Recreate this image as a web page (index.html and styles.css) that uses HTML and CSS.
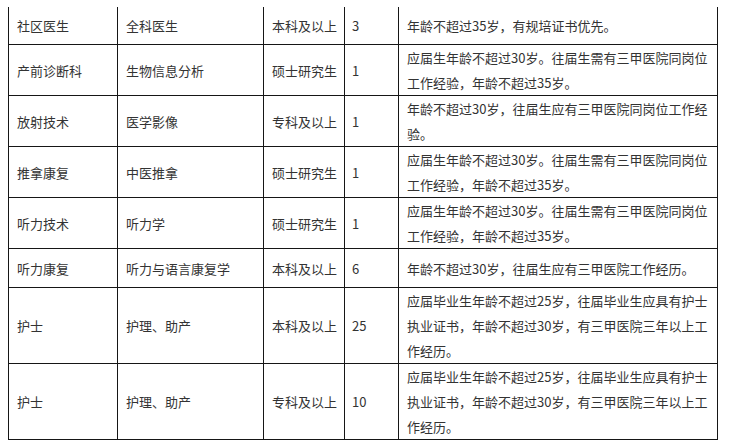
FILE: index.html
```html
<!DOCTYPE html>
<html lang="zh-CN">
<head>
<meta charset="utf-8">
<title>招聘岗位</title>
<link rel="stylesheet" href="styles.css">
</head>
<body>
<div class="sheet">
  <div class="grid">
    <div class="cell">社区医生</div><div class="cell">全科医生</div><div class="cell">本科及以上</div><div class="cell num">3</div><div class="cell">年龄不超过35岁，有规培证书优先。</div>

    <div class="cell">产前诊断科</div><div class="cell">生物信息分析</div><div class="cell">硕士研究生</div><div class="cell num">1</div><div class="cell">应届生年龄不超过30岁。往届生需有三甲医院同岗位<br>工作经验，年龄不超过35岁。</div>

    <div class="cell">放射技术</div><div class="cell">医学影像</div><div class="cell">专科及以上</div><div class="cell num">1</div><div class="cell">年龄不超过30岁，往届生应有三甲医院同岗位工作经<br>验。</div>

    <div class="cell">推拿康复</div><div class="cell">中医推拿</div><div class="cell">硕士研究生</div><div class="cell num">1</div><div class="cell">应届生年龄不超过30岁。往届生需有三甲医院同岗位<br>工作经验，年龄不超过35岁。</div>

    <div class="cell">听力技术</div><div class="cell">听力学</div><div class="cell">硕士研究生</div><div class="cell num">1</div><div class="cell">应届生年龄不超过30岁。往届生需有三甲医院同岗位<br>工作经验，年龄不超过35岁。</div>

    <div class="cell">听力康复</div><div class="cell">听力与语言康复学</div><div class="cell">本科及以上</div><div class="cell num">6</div><div class="cell">年龄不超过30岁，往届生应有三甲医院工作经历。</div>

    <div class="cell">护士</div><div class="cell">护理、助产</div><div class="cell">本科及以上</div><div class="cell num">25</div><div class="cell">应届毕业生年龄不超过25岁，往届毕业生应具有护士<br>执业证书，年龄不超过30岁，有三甲医院三年以上工<br>作经历。</div>

    <div class="cell">护士</div><div class="cell">护理、助产</div><div class="cell">专科及以上</div><div class="cell num">10</div><div class="cell">应届毕业生年龄不超过25岁，往届毕业生应具有护士<br>执业证书，年龄不超过30岁，有三甲医院三年以上工<br>作经历。</div>
  </div>
</div>
</body>
</html>
```
FILE: styles.css
```css
html, body {
  margin: 0;
  padding: 0;
  background: #ffffff;
}

.sheet {
  padding: 7px 0 0 8px;
}

.grid {
  display: grid;
  width: fit-content;
  grid-template-columns: 108px 145px 80px 53px 318px;
  grid-template-rows: 37px 50px 50px 50px 50px 38px 75px 75px;
  gap: 1px;
  padding: 0 1px 1px 1px;
  background: #161616;
}

.cell {
  background: #ffffff;
  display: flex;
  align-items: center;
  padding: 0 0 0 8px;
  font-family: "Noto Sans CJK SC", "Liberation Sans", sans-serif;
  font-size: 13px;
  line-height: 25px;
  color: #333333;
  white-space: nowrap;
  overflow: hidden;
}

.num {
  padding-left: 7px;
}
```
